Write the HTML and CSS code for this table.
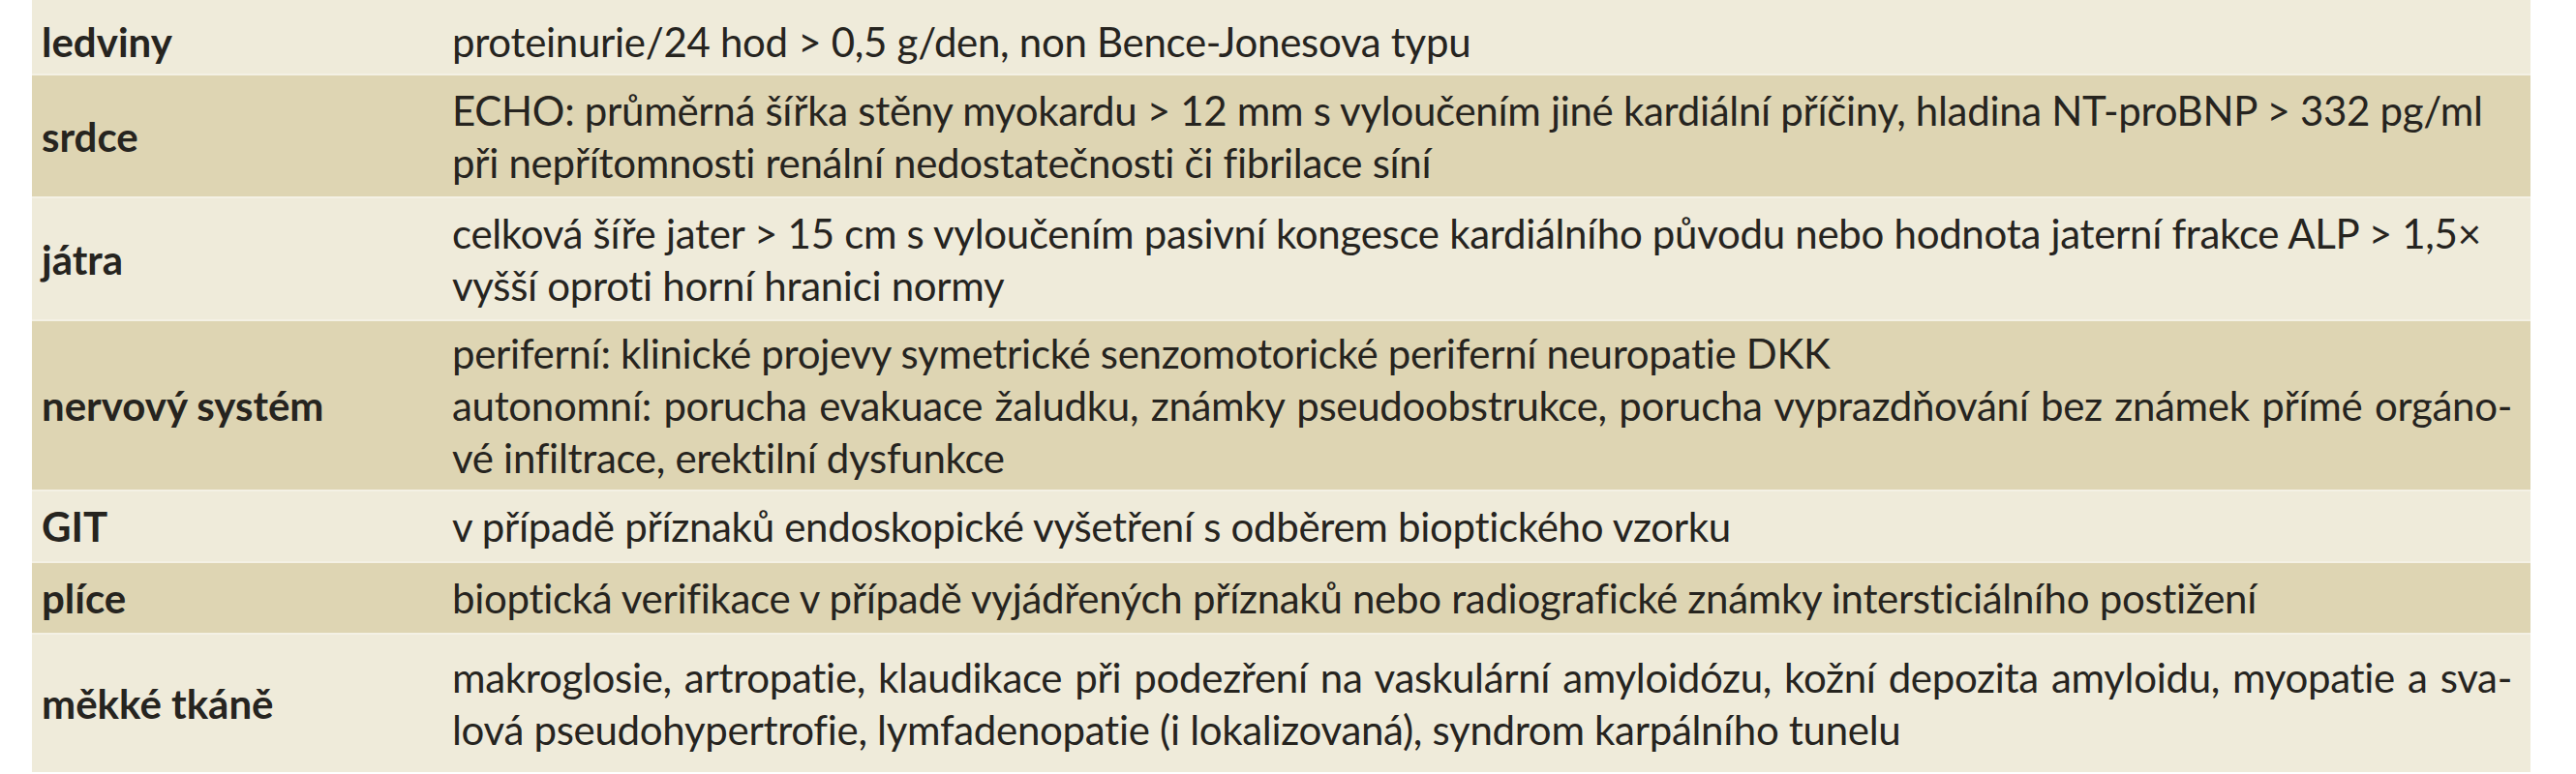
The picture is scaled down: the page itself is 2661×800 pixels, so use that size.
FILE: index.html
```html
<!DOCTYPE html>
<html lang="cs">
<head>
<meta charset="utf-8">
<title>Orgánové postižení</title>
<link rel="stylesheet" href="styles.css">
</head>
<body>
<div class="table">
  <div class="row light r1">
    <div class="label">ledviny</div>
    <div class="desc"><span class="line">proteinurie/24 hod &gt; 0,5 g/den, non Bence-Jonesova typu</span></div>
  </div>
  <div class="row dark r2">
    <div class="label">srdce</div>
    <div class="desc"><span class="line">ECHO: průměrná šířka stěny myokardu &gt; 12 mm s vyloučením jiné kardiální příčiny, hladina NT-proBNP &gt; 332 pg/ml</span><span class="line">při nepřítomnosti renální nedostatečnosti či fibrilace síní</span></div>
  </div>
  <div class="row light r3">
    <div class="label">játra</div>
    <div class="desc"><span class="line">celková šíře jater &gt; 15 cm s vyloučením pasivní kongesce kardiálního původu nebo hodnota jaterní frakce ALP &gt; 1,5×</span><span class="line">vyšší oproti horní hranici normy</span></div>
  </div>
  <div class="row dark r4">
    <div class="label">nervový systém</div>
    <div class="desc"><span class="line">periferní: klinické projevy symetrické senzomotorické periferní neuropatie DKK</span><span class="line full">autonomní: porucha evakuace žaludku, známky pseudoobstrukce, porucha vyprazdňování bez známek přímé orgáno-</span><span class="line">vé infiltrace, erektilní dysfunkce</span></div>
  </div>
  <div class="row light r5">
    <div class="label">GIT</div>
    <div class="desc"><span class="line">v případě příznaků endoskopické vyšetření s odběrem bioptického vzorku</span></div>
  </div>
  <div class="row dark r6">
    <div class="label">plíce</div>
    <div class="desc"><span class="line">bioptická verifikace v případě vyjádřených příznaků nebo radiografické známky intersticiálního postižení</span></div>
  </div>
  <div class="row light r7">
    <div class="label">měkké tkáně</div>
    <div class="desc"><span class="line full">makroglosie, artropatie, klaudikace při podezření na vaskulární amyloidózu, kožní depozita amyloidu, myopatie a sva-</span><span class="line">lová pseudohypertrofie, lymfadenopatie (i lokalizovaná), syndrom karpálního tunelu</span></div>
  </div>
</div>
</body>
</html>
```

FILE: styles.css
```css
html, body {
  margin: 0;
  padding: 0;
  background: #ffffff;
}

body {
  font-family: "Lato", "Open Sans", "Liberation Sans", sans-serif;
  color: #26241f;
  font-size: 42px;
  line-height: 54px;
}

.table {
  margin-left: 33px;
  width: 2581px;
  display: flex;
  flex-direction: column;
}

.row {
  display: grid;
  grid-template-columns: 434px 1fr;
  align-items: center;
  border-bottom: 2px solid #f4f1e5;
}

.light { background: #efebda; }
.dark { background: #ded5b3; }

.r1 { height: 78px; box-sizing: border-box; padding-top: 10px; }
.r2 { height: 125px; }
.r3 { height: 125px; }
.r4 { height: 174px; }
.r5 { height: 72px; }
.r6 { height: 72px; }
.r7 { height: 142px; border-bottom: none; }

.label {
  padding-left: 10px;
  font-weight: 700;
}

.desc {
  display: flex;
  flex-direction: column;
  padding-right: 19px;
  letter-spacing: -0.3px;
}

.line {
  white-space: nowrap;
}

.line.full {
  text-align: justify;
  text-align-last: justify;
  white-space: normal;
}
```
